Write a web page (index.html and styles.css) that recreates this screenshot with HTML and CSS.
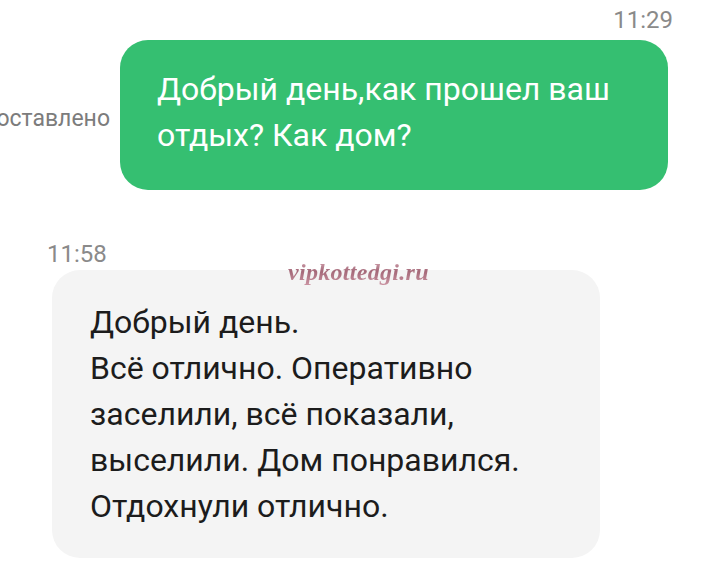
FILE: index.html
```html
<!DOCTYPE html>
<html lang="ru">
<head>
  <meta charset="UTF-8" />
  <meta name="viewport" content="width=device-width, initial-scale=1.0"/>
  <title>Чат</title>
  <link rel="stylesheet" href="styles.css">
</head>
<body>

<div class="chat">
  <!-- исходящее сообщение -->
  <div class="msg msg-out">
    <div class="time">11:29</div>
    <div class="row">
      <div class="status"><span>Доставлено</span></div>
      <div class="bubble bubble-out">Добрый день,как прошел ваш<br>отдых? Как дом?</div>
    </div>
  </div>

  <!-- входящее сообщение -->
  <div class="msg msg-in">
    <div class="time">11:58</div>
    <div class="bubble bubble-in">Добрый день.<br>Всё отлично. Оперативно<br>заселили, всё показали,<br>выселили. Дом понравился.<br>Отдохнули отлично.</div>
    <div class="watermark">vipkottedgi.ru</div>
  </div>
</div>

</body>
</html>
```

FILE: styles.css
```css
* {
  box-sizing: border-box;
}

body {
  margin: 0;
  background: #fff;
  font-family: Roboto, 'Noto Sans', sans-serif;
  overflow: hidden;
}

.chat {
  width: 720px;
  height: 562px;
  padding-top: 6px;
}

.time {
  font-size: 24px;
  line-height: 28px;
  color: #8a8a8a;
}

.msg-out .time {
  text-align: right;
  padding-right: 47px;
}

.row {
  display: flex;
  align-items: center;
  justify-content: flex-end;
  margin-top: 6px;
  padding-right: 52px;
}

/* статус доставки уходит за левый край экрана */
.status {
  width: 120px;
  padding: 6px 10px 0 0;
  overflow: hidden;
  display: flex;
  justify-content: flex-end;
  white-space: nowrap;
  font-size: 23px;
  color: #7c7c7c;
}

.bubble {
  width: 548px;
  border-radius: 28px;
  font-size: 32px;
  line-height: 46px;
}

.bubble-out {
  background: #35bf71;
  color: #fff;
  padding: 26px 16px 32px 37px;
}

.msg-in {
  position: relative;
  margin-top: 50px;
  padding-left: 52px;
}

.msg-in .time {
  margin-left: -5px;
}

.bubble-in {
  margin-top: 2px;
  background: #f4f4f4;
  color: #1c1c1c;
  padding: 29px 16px 29px 38px;
}

.watermark {
  position: absolute;
  left: 288px;
  top: 19px;
  font-family: 'Liberation Serif', serif;
  font-style: italic;
  font-weight: bold;
  font-size: 24px;
  letter-spacing: 0.3px;
  background: linear-gradient(180deg, #dcb0bc 0%, #a46878 45%, #cc96a4 100%);
  -webkit-background-clip: text;
  background-clip: text;
  color: transparent;
}
```
